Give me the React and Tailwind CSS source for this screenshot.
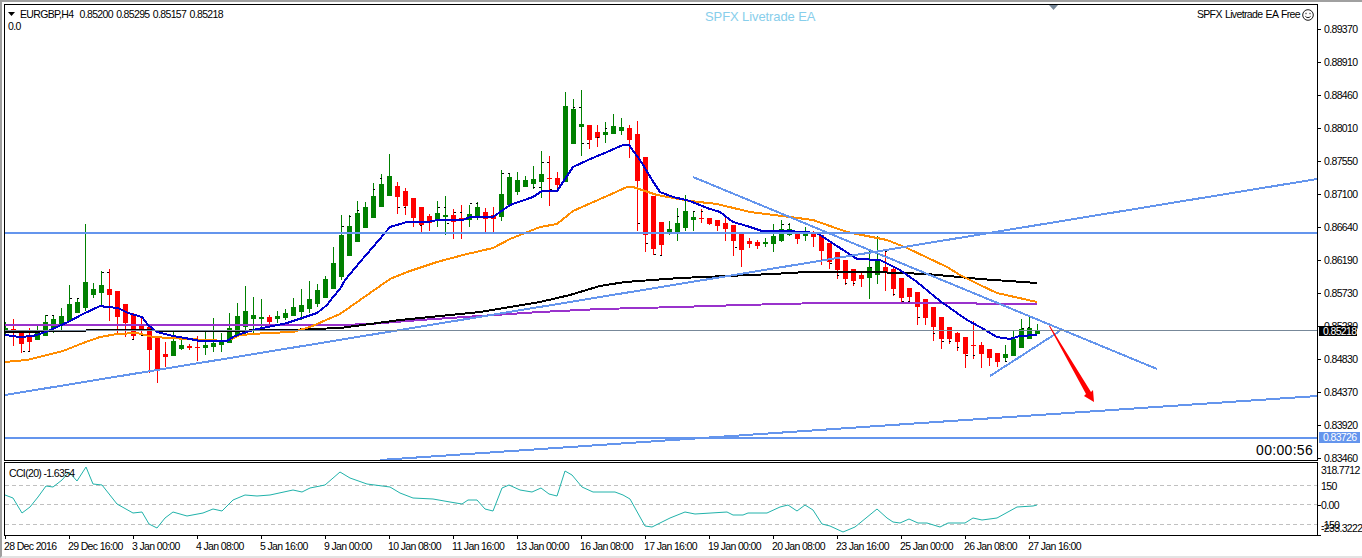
const BLUE = "#6495ed";

// [wickTop, bodyTop, bodyBottom, wickBottom, up?] in page pixels, 8px apart
const candles = [
  [322,328,333,336,1],[319,329,331,346,0],[330,330,344,353,0],[328,337,342,352,0],[326,333,340,340,1],
  [315,322,336,336,1],[315,319,329,333,1],[308,316,326,330,1],[285,304,321,322,1],[298,302,313,313,1],
  [224,282,308,311,1],[283,289,295,298,1],[271,285,293,305,1],[269,289,295,321,0],[291,291,317,334,0],
  [304,304,323,337,0],[313,314,336,339,0],[317,325,330,336,0],[327,327,350,373,0],[337,338,370,383,0],
  [342,354,357,367,0],[332,341,356,356,1],[338,345,349,350,1],[344,346,348,350,0],[336,347,348,361,0],
  [332,345,348,355,1],[318,343,347,352,1],[333,342,345,352,1],[313,328,343,343,1],[303,316,336,336,1],
  [286,311,327,336,1],[297,315,319,335,1],[299,317,319,327,1],[315,317,322,327,0],[311,316,319,323,1],
  [309,313,318,320,1],[298,307,316,316,1],[289,305,312,320,1],[281,299,309,313,1],[284,290,304,307,1],
  [276,279,298,298,1],[247,263,289,289,1],[215,235,277,280,1],[215,226,256,256,1],[201,213,242,242,1],
  [202,207,228,228,1],[183,196,218,218,1],[174,184,207,207,1],[154,176,196,196,1],[182,186,197,214,0],
  [188,191,206,215,0],[198,198,218,227,0],[207,207,225,232,0],[214,216,223,231,0],[201,213,220,227,1],
  [196,215,217,235,1],[209,215,222,239,0],[205,218,220,239,0],[205,214,220,227,1],[202,207,216,220,1],
  [208,212,219,232,0],[207,215,219,232,0],[170,194,217,221,1],[173,177,205,205,1],[172,180,192,195,1],
  [176,180,187,187,1],[166,179,184,189,1],[151,174,182,198,1],[156,178,179,206,0],[172,178,185,190,0],
  [92,106,182,182,1],[99,109,144,144,1],[90,124,127,156,1],[125,125,140,149,0],[125,132,138,147,0],
  [122,132,135,143,1],[114,126,134,134,1],[118,127,131,135,1],[125,128,140,158,0],[121,134,181,231,0],
  [157,157,235,252,0],[196,196,249,255,0],[222,222,245,256,0],[221,229,232,235,1],[208,223,232,241,1],
  [195,211,228,231,1],[211,217,220,231,1],[209,218,219,223,0],[218,218,224,225,0],[220,220,226,231,0],
  [215,223,229,241,0],[225,225,241,256,0],[234,234,250,267,0],[238,241,244,248,0],[240,242,246,249,0],
  [238,242,244,247,1],[224,236,244,252,1],[220,229,241,242,1],[223,229,235,236,1],[233,234,239,244,0],
  [227,233,236,241,1],[231,234,237,247,0],[235,235,251,265,0],[243,243,262,269,0],[252,252,270,279,0],
  [260,260,279,285,0],[269,269,281,286,0],[273,275,279,287,0],[250,267,278,299,1],[236,261,275,284,1],
  [251,267,272,291,0],[267,269,289,296,0],[278,278,298,302,0],[288,288,297,302,0],[292,292,307,325,0],
  [299,299,318,325,0],[307,307,327,341,0],[317,317,339,349,0],[327,327,339,344,0],[332,333,342,351,0],
  [337,337,354,368,0],[321,345,346,359,0],[342,345,354,368,0],[349,349,358,366,0],[353,353,362,367,0],
  [345,354,358,362,1],[330,339,356,356,1],[319,329,348,348,1],[317,328,339,339,1],[324,330,334,334,1],
];

// little black marks beside the wicks
const marks = [
  [23,351],[28,351],[46,315],[52,315],[70,298],[77,298],[102,272],[107,272],[132,339],[141,335],
  [342,226],[349,216],[357,210],[373,189],[380,178],[398,207],[404,207],[420,225],[438,207],[444,207],
  [447,223],[454,212],[460,212],[470,203],[476,203],[502,173],[508,173],[533,187],[539,187],[542,162],
  [547,162],[550,189],[573,107],[579,107],[582,143],[587,143],[597,137],[605,128],[638,223],[646,243],
  [654,254],[660,255],[677,216],[693,211],[701,211],[735,247],[782,224],[788,224],[830,263],[837,275],
  [845,283],[853,283],[870,267],[877,251],[885,251],[893,294],[902,301],[908,301],[918,317],[933,333],
  [942,341],[949,341],[957,347],[966,355],[973,355],[1005,361],[1013,330],[1022,328],[1028,327],
];

const blueMa = "5,335 20,337 33,336 43,333 57,327 68,322 83,314 100,306 107,307 118,308 128,313 142,317 148,325 157,332 173,336 185,338 200,341 227,341 233,337 243,333 257,329 273,326 287,323 302,318 317,313 327,305 333,297 340,289 345,280 360,262 373,247 390,227 407,222 428,222 437,220 463,220 470,217 493,217 510,205 533,197 542,191 557,191 573,167 588,160 607,152 623,145 629,145 642,163 652,180 660,192 673,197 690,201 707,208 720,212 733,222 747,226 762,231 788,231 817,233 840,248 857,259 880,260 900,270 917,282 940,301 967,320 980,327 997,337 1010,339 1020,336 1037,335";
const orangeMa = "5,362 27,360 43,356 63,351 83,343 100,337 117,334 137,333 153,337 187,339 227,341 240,335 267,333 293,332 310,327 340,314 390,279 407,272 437,262 463,255 493,248 510,239 540,227 557,224 573,211 607,196 627,187 633,187 657,195 690,201 717,204 750,212 790,217 813,220 847,232 887,240 907,248 947,267 960,275 980,285 997,293 1037,302";
const blackMa = "5,332 77,331 95,330 213,331 287,330 340,328 400,320 480,312 540,302 570,295 600,286 625,282 680,278 727,276 773,274 807,272 873,272 927,274 980,279 1037,283";
const purpleMa = "5,325 340,325 370,324 420,320 480,316 540,312 600,309 640,308 678,307 710,306 742,305 782,304 822,303 973,303 980,304 1037,304";
const cci = "5,495 13,498 22,513 30,507 38,497 46,486 53,487 62,480 69,472 77,481 86,467 93,484 102,485 117,504 133,513 142,512 149,524 157,528 165,518 173,512 187,516 203,513 213,509 222,511 233,500 245,495 257,496 270,495 293,490 302,492 310,488 325,485 340,472 350,478 367,484 390,487 400,493 413,498 433,499 450,502 462,504 468,500 477,500 485,509 493,511 502,488 509,485 520,490 532,492 541,488 549,494 557,496 565,471 572,475 582,487 593,492 615,492 623,495 630,499 645,526 652,527 670,518 685,512 695,514 727,512 733,515 743,515 748,513 767,513 780,507 788,505 797,511 805,505 813,510 822,524 830,526 843,532 855,527 877,509 887,518 893,522 900,523 909,519 918,523 927,523 940,527 948,523 965,523 973,518 982,520 997,518 1017,507 1033,506 1037,505";

const prices = ["0.89370","0.88910","0.88460","0.88010","0.87550","0.87100","0.86640","0.86190","0.85730","0.85280","0.84830","0.84370","0.83920","0.83460"];
const times = ["28 Dec 2016","29 Dec 16:00","3 Jan 00:00","4 Jan 08:00","5 Jan 16:00","9 Jan 00:00","10 Jan 08:00","11 Jan 16:00","13 Jan 00:00","16 Jan 08:00","17 Jan 16:00","19 Jan 00:00","20 Jan 08:00","23 Jan 16:00","25 Jan 00:00","26 Jan 08:00","27 Jan 16:00"];

function PriceChart() {
  return (
    <svg className="block w-[1312px] h-[455px]" viewBox="5 5 1312 455" shapeRendering="crispEdges">
      {candles.map(([hi, top, bottom, lo, up], i) => {
        const x = 5 + i * 8;
        const color = up ? "#008000" : "#ff0000";
        return (
          <g key={i} fill={color}>
            <rect x={x} y={hi} width="1" height={lo - hi} />
            <rect x={x - 2} y={top} width="5" height={Math.max(bottom - top, 1)} />
          </g>
        );
      })}
      {marks.map(([x, y], i) => (
        <rect key={i} x={x} y={y} width="2" height="1" fill="#000" />
      ))}
      <g fill="none" strokeWidth="2">
        <polyline points={purpleMa} stroke="#9932cc" />
        <polyline points={blackMa} stroke="#000" />
        <polyline points={orangeMa} stroke="#ff8c00" />
        <polyline points={blueMa} stroke="#0000cd" />
        <line x1="5" y1="232.5" x2="1317" y2="232.5" stroke={BLUE} />
        <line x1="5" y1="437.5" x2="1317" y2="437.5" stroke={BLUE} />
        <line x1="5" y1="395" x2="1317" y2="179" stroke={BLUE} />
        <line x1="693" y1="177" x2="1157" y2="369" stroke={BLUE} />
        <line x1="990" y1="376" x2="1060" y2="331" stroke={BLUE} />
        <line x1="380" y1="460" x2="1317" y2="396" stroke={BLUE} />
        <line x1="5" y1="330.5" x2="1317" y2="330.5" stroke="#778899" strokeWidth="1" />
      </g>
      <polygon points="1049,326 1050,326 1091,392 1093,390 1094,402 1084,396 1086,394" fill="#ff0000" shapeRendering="auto" />
      <polygon points="1049,5 1058,5 1053.5,10" fill="#778899" shapeRendering="auto" />
    </svg>
  );
}

function CciChart() {
  return (
    <svg className="block w-[1312px] h-[72px]" viewBox="5 463 1312 72">
      <g stroke="#c0c0c0" strokeDasharray="4 3" shapeRendering="crispEdges">
        <line x1="5" y1="485.5" x2="1317" y2="485.5" />
        <line x1="5" y1="504.5" x2="1317" y2="504.5" />
        <line x1="5" y1="524.5" x2="1317" y2="524.5" />
      </g>
      <polyline points={cci} fill="none" stroke="#20b2aa" strokeWidth="1" />
    </svg>
  );
}

export default function App() {
  return (
    <div className="w-[1362px] h-[558px] overflow-hidden bg-white border-t-2 border-l-2 border-b-2 border-t-[#a0a0a0] border-l-[#a0a0a0] border-b-[#e3e3e3] pt-[2px] pl-[2px] text-[10.5px] leading-none tracking-[-0.65px] text-black font-['Liberation_Sans',sans-serif]">
      <div className="flex h-[457px]">
        <div className="relative w-[1314px] h-[457px] border border-black shrink-0">
          <PriceChart />
          {/* labels over the chart */}
          <div className="absolute inset-0 flex items-start px-[3px] pt-[3px]">
            <div className="w-[697px]">
              <div className="flex items-center h-[12px]">
                <svg className="w-[7px] h-[4px] mr-[5px]" viewBox="0 0 7 4"><polygon points="0,0 7,0 3.5,4" fill="#000" /></svg>
                <span className="mr-[6px]">EURGBP,H4</span>
                <span className="[word-spacing:1px]">0.85200 0.85295 0.85157 0.85218</span>
              </div>
              <div className="mt-px h-[11px] flex items-center">0.0</div>
            </div>
            <div className="mt-px text-[13px] tracking-[-0.1px] text-[#87ceeb] leading-[16px]">SPFX Livetrade EA</div>
            <div className="ml-auto flex items-center gap-[2px] h-[13px]">
              <span className="[word-spacing:1px]">SPFX Livetrade EA Free</span>
              <svg className="w-[12px] h-[12px]" viewBox="0 0 12 12" fill="none" stroke="#000" strokeWidth="0.9">
                <circle cx="6" cy="6" r="5.3" />
                <path d="M3.4 7.3C4.3 9 7.7 9 8.6 7.3" />
                <path d="M4 3.8v1.4M8 3.8v1.4" />
              </svg>
            </div>
          </div>
          <div className="absolute right-[4px] bottom-[3px] text-[14px] tracking-[0.3px] leading-[14px]">00:00:56</div>
        </div>
        <div className="relative flex-1 pt-[9px]">
          {prices.map((p) => (
            <div key={p} className="flex items-center h-[33px]">
              <div className="w-[3px] h-px bg-black" />
              <span className="ml-[3px]">{p}</span>
            </div>
          ))}
          <div className="absolute left-px top-[322px] w-[38px] h-[10px] flex items-center pl-[4px] bg-black text-white">0.85218</div>
          <div className="absolute left-px top-[428px] w-[41px] h-[11px] flex items-center pl-[4px] bg-[#6495ed] text-white">0.83726</div>
        </div>
      </div>
      <div className="flex mt-px">
        <div className="relative w-[1314px] h-[74px] border border-black shrink-0">
          <CciChart />
          <div className="absolute left-[4px] top-[5px]">CCI(20) -1.6354</div>
        </div>
        <div className="flex-1 flex flex-col pt-[3px] whitespace-nowrap">
          <span className="pl-[3px] h-[10px]">318.7712</span>
          <span className="pl-[3px] h-[10px] mt-[6px]">150</span>
          <div className="flex items-center h-[10px] mt-[9px]">
            <div className="w-[3px] h-px bg-black" />
            <span>0.00</span>
          </div>
          <span className="pl-[3px] h-[10px] mt-[10px]">-150</span>
          <span className="pl-[3px] h-[10px] -mt-[7px]">-233.3222</span>
          <div className="w-[3px] h-px bg-black mt-[2px]" />
        </div>
      </div>
      <div className="flex ml-px">
        {times.map((t) => (
          <div key={t} className="w-[64px] shrink-0">
            <div className="w-px h-[3px] bg-black" />
            <div className="-ml-px mt-[2px] whitespace-nowrap">{t}</div>
          </div>
        ))}
      </div>
    </div>
  );
}
